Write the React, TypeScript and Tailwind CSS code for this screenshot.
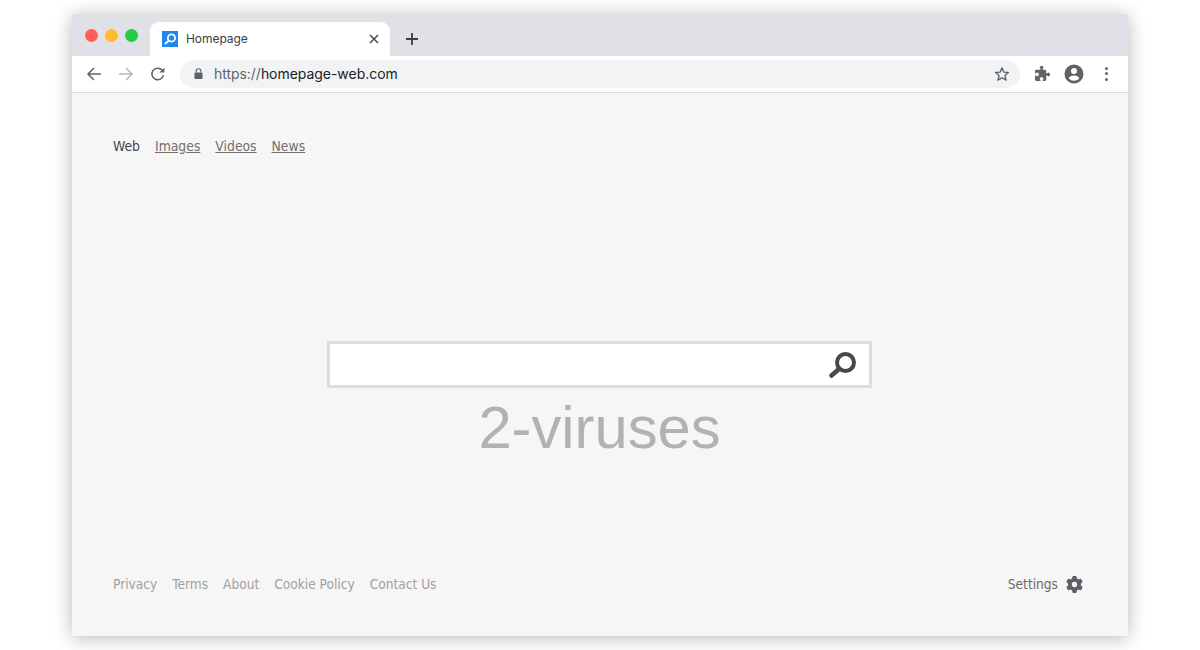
import { FaGear, FaPuzzlePiece } from 'react-icons/fa6';

const topLinks = ['Images', 'Videos', 'News'];
const footerLinks = ['Privacy', 'Terms', 'About', 'Cookie Policy', 'Contact Us'];

function Magnifier({ className }: { className: string }) {
  return (
    <svg viewBox="0 0 28 28" className={className} fill="none" stroke="currentColor">
      <circle cx="17.5" cy="11.5" r="8.5" strokeWidth="4" />
      <path d="M11 18 L3.5 24.5" strokeWidth="4.6" strokeLinecap="round" />
    </svg>
  );
}

function TabStrip() {
  return (
    <div className="flex h-[42px] bg-[#e0e1e6]">
      <div className="flex w-[78px] items-center gap-[7.5px] pt-[3px] pl-[13px] pb-[2px]">
        <span className="size-[12.5px] rounded-full bg-[#ff5f57]" />
        <span className="size-[12.5px] rounded-full bg-[#febc2e]" />
        <span className="size-[12.5px] rounded-full bg-[#28c840]" />
      </div>
      <div className="mt-[8px] flex w-[240px] items-center rounded-t-[9px] bg-white pl-[12px] pr-[11px]">
        <span className="flex size-[16px] items-center justify-center bg-[#1e88ee] text-white">
          <Magnifier className="size-[12px]" />
        </span>
        <span className="ml-[8px] flex-1 text-[12px] tracking-[-0.05px] text-[#3c4043]">Homepage</span>
        <svg viewBox="0 0 10 10" className="size-[10px] text-[#3c4043]" fill="none" stroke="currentColor" strokeWidth="1.4">
          <path d="M1 1 L9 9 M9 1 L1 9" />
        </svg>
      </div>
      <div className="ml-[16px] mt-[8px] flex items-center">
        <svg viewBox="0 0 12 12" className="size-[12px] text-[#3c4043]" fill="none" stroke="currentColor" strokeWidth="1.8">
          <path d="M6 0 V12 M0 6 H12" />
        </svg>
      </div>
    </div>
  );
}

function Toolbar() {
  return (
    <div className="flex h-[37px] items-center border-b border-[#dcdcdc] bg-white pb-[1px]">
      <div className="ml-[14px] flex items-center gap-[16px]">
        <svg viewBox="0 0 16 16" className="size-[16px] text-[#5f6368]" fill="none" stroke="currentColor" strokeWidth="1.5">
          <path d="M15 8 H2 M8 2 L2 8 L8 14" />
        </svg>
        <svg viewBox="0 0 16 16" className="size-[16px] text-[#b4b6ba]" fill="none" stroke="currentColor" strokeWidth="1.5">
          <path d="M1 8 H14 M8 2 L14 8 L8 14" />
        </svg>
        <svg viewBox="0 0 16 16" className="size-[16px] text-[#5f6368]" fill="none">
          <path d="M13.4 9.2 A5.8 5.8 0 1 1 12 4" stroke="currentColor" strokeWidth="1.5" />
          <path d="M14.4 1.6 V6.6 H9.4 Z" fill="currentColor" />
        </svg>
      </div>
      <div className="ml-[14px] flex h-[28px] w-[840px] items-center rounded-full bg-[#f1f3f4] pl-[14px] pr-[10px]">
        <svg viewBox="0 0 10 12" className="h-[11px] w-[9px] text-[#5f6368]" fill="none">
          <path d="M2.4 5 V3.4 A2.6 2.6 0 0 1 7.6 3.4 V5" stroke="currentColor" strokeWidth="1.2" />
          <rect x="0.5" y="5" width="9" height="7" rx="1" fill="currentColor" />
        </svg>
        <span className="ml-[11px] flex-1 text-[14px] tracking-[-0.04px] text-[#202124]">
          <span className="text-[#5f6368]">https://</span>homepage-web.com
        </span>
        <svg viewBox="0 0 24 24" className="size-[16px] text-[#5f6368]" fill="none" stroke="currentColor" strokeWidth="2" strokeLinejoin="round">
          <path d="M12 2.8 L14.8 9.2 L21.6 9.8 L16.4 14.4 L18 21.2 L12 17.6 L6 21.2 L7.6 14.4 L2.4 9.8 L9.2 9.2 Z" />
        </svg>
      </div>
      <div className="ml-[15px] flex items-center">
        <FaPuzzlePiece className="size-[15px] text-[#5f6368]" />
        <svg viewBox="0 0 20 20" className="ml-[14px] size-[20px] text-[#5f6368]">
          <path
            fill="currentColor"
            fillRule="evenodd"
            d="M10 .5 A9.5 9.5 0 1 1 10 19.5 A9.5 9.5 0 1 1 10 .5 Z M10 4 A3 3 0 1 0 10 10 A3 3 0 1 0 10 4 Z M10 11.4 C7.6 11.4 5 12.5 4.6 14.2 A7 7 0 0 0 15.4 14.2 C15 12.5 12.4 11.4 10 11.4 Z"
          />
        </svg>
        <div className="ml-[21px] flex flex-col gap-[2.5px]">
          <span className="size-[3px] rounded-full bg-[#5f6368]" />
          <span className="size-[3px] rounded-full bg-[#5f6368]" />
          <span className="size-[3px] rounded-full bg-[#5f6368]" />
        </div>
      </div>
    </div>
  );
}

export default function App() {
  return (
    <div className="h-[650px] overflow-hidden bg-white pt-[14px]">
      <div className="mx-auto flex h-[622px] w-[1056px] flex-col bg-[#f6f6f6] shadow-[0_2px_18px_rgba(0,0,0,0.28)]">
        <div className="font-['Inter','Roboto',sans-serif]">
          <TabStrip />
          <Toolbar />
        </div>

        <nav className="ml-[41px] mt-[44px] flex gap-[15px] font-['DejaVu_Sans',sans-serif] font-stretch-condensed text-[13.8px] leading-[18px] text-[#707070]">
          <span className="text-[#444444]">Web</span>
          {topLinks.map((link) => (
            <a key={link} className="underline">{link}</a>
          ))}
        </nav>

        <div className="mt-[186px] flex flex-col items-center">
          <div className="mr-[2px] flex h-[47px] w-[545px] items-center justify-end border-[3px] border-[#dddddd] bg-white pr-[13px] text-[#484848]">
            <Magnifier className="size-[28px]" />
          </div>
          <div className="mr-[1px] mt-[5px] font-['Liberation_Sans',sans-serif] text-[59.7px] leading-[69px] text-[#b2b2b2]">
            2-viruses
          </div>
        </div>

        <footer className="ml-[41px] mr-[45px] mt-[112px] flex items-center justify-between font-['DejaVu_Sans',sans-serif] font-stretch-condensed text-[13.6px] leading-[20px]">
          <div className="flex gap-[15px] text-[#a0a0a0]">
            {footerLinks.map((link) => (
              <a key={link}>{link}</a>
            ))}
          </div>
          <div className="flex items-center gap-[8px] text-[#6b6b6b]">
            <span>Settings</span>
            <FaGear className="size-[17px] text-[#5f5f66]" />
          </div>
        </footer>
      </div>
    </div>
  );
}
